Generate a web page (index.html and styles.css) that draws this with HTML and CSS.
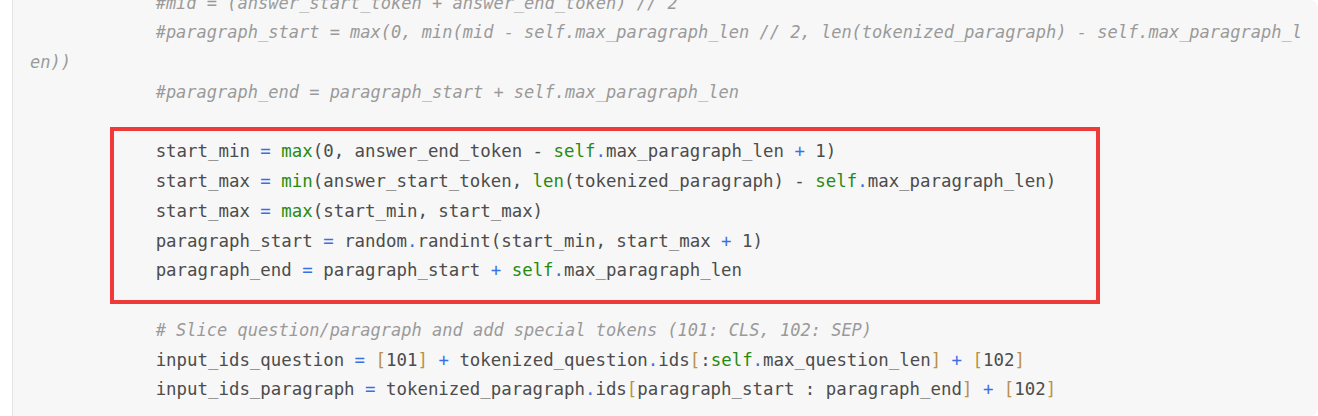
FILE: index.html
```html
<!DOCTYPE html>
<html lang="en">
<head>
<meta charset="utf-8">
<title>Code snippet</title>
<link rel="stylesheet" href="styles.css">
</head>
<body>
<div class="code-block">
<pre class="code"><code>            <span class="c">#mid = (answer_start_token + answer_end_token) // 2</span>
            <span class="c">#paragraph_start = max(0, min(mid - self.max_paragraph_len // 2, len(tokenized_paragraph) - self.max_paragraph_len))</span>
            <span class="c">#paragraph_end = paragraph_start + self.max_paragraph_len</span>

            start_min <span class="o">=</span> <span class="b">max</span>(0, answer_end_token - <span class="b">self</span><span class="o">.</span>max_paragraph_len <span class="o">+</span> 1)
            start_max <span class="o">=</span> <span class="b">min</span>(answer_start_token, <span class="b">len</span>(tokenized_paragraph) - <span class="b">self</span><span class="o">.</span>max_paragraph_len)
            start_max <span class="o">=</span> <span class="b">max</span>(start_min, start_max)
            paragraph_start <span class="o">=</span> random<span class="o">.</span>randint(start_min, start_max <span class="o">+</span> 1)
            paragraph_end <span class="o">=</span> paragraph_start <span class="o">+</span> <span class="b">self</span><span class="o">.</span>max_paragraph_len

            <span class="c"># Slice question/paragraph and add special tokens (101: CLS, 102: SEP)</span>
            input_ids_question <span class="o">=</span> <span class="k">[</span>101<span class="k">]</span> <span class="o">+</span> tokenized_question<span class="o">.</span>ids<span class="k">[</span>:<span class="b">self</span><span class="o">.</span>max_question_len<span class="k">]</span> <span class="o">+</span> <span class="k">[</span>102<span class="k">]</span>
            input_ids_paragraph <span class="o">=</span> tokenized_paragraph<span class="o">.</span>ids<span class="k">[</span>paragraph_start : paragraph_end<span class="k">]</span> <span class="o">+</span> <span class="k">[</span>102<span class="k">]</span></code></pre>
<div class="highlight-box"></div>
</div>
</body>
</html>
```
FILE: styles.css
```css
html, body {
  margin: 0;
  padding: 0;
  background: #ffffff;
}

.code-block {
  position: relative;
  margin-left: 12px;
  height: 416px;
  box-sizing: border-box;
  background: #f7f7f7;
  border-left: 1px solid #e4e4e4;
  border-radius: 0 8px 8px 0;
  padding: 0 12px 0 17px;
  overflow: hidden;
}

.code {
  margin: -11.3px 0 0 0;
  font-family: "DejaVu Sans Mono", "Liberation Mono", monospace;
  font-size: 17.4px;
  line-height: 29.75px;
  color: #4c4c4c;
  white-space: pre-wrap;
  word-break: break-all;
}

.code code {
  font-family: inherit;
}

.c {
  color: #9a9a9a;
  font-style: italic;
  font-size: 17px;
}

.o {
  color: #3a70e4;
}

.b {
  color: #278a10;
}

.k {
  color: #b99248;
}

.highlight-box {
  position: absolute;
  left: 97px;
  top: 127px;
  width: 990px;
  height: 177px;
  box-sizing: border-box;
  border: 4px solid #ef3a3a;
  pointer-events: none;
}
```
